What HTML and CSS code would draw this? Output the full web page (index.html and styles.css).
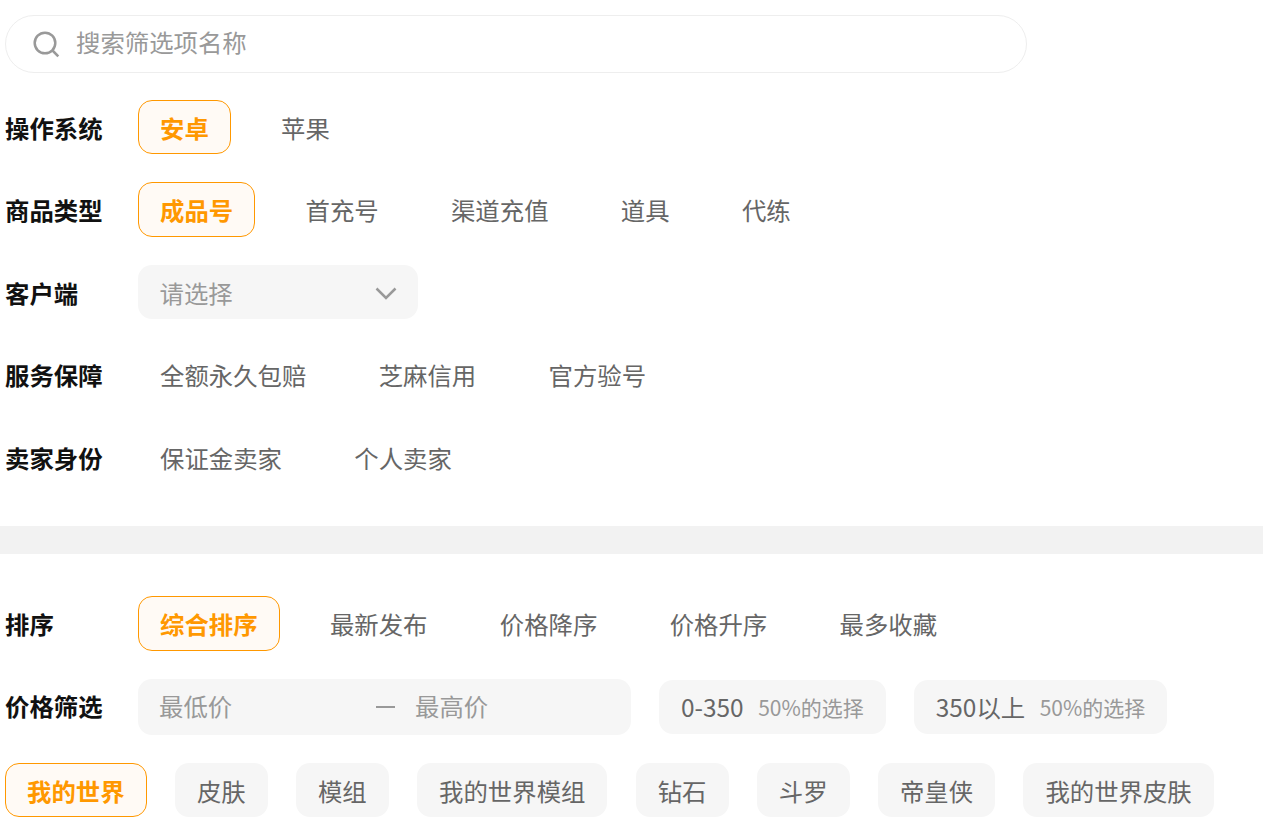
FILE: index.html
```html
<!DOCTYPE html>
<html lang="zh-CN">
<head>
    <meta charset="UTF-8">
    <title>筛选</title>
    <link rel="stylesheet" href="styles.css">
</head>
<body>
    <div class="search-box">
        <svg class="search-icon" width="27" height="27" viewBox="0 0 27 27" fill="none" stroke="#999" stroke-width="2.5"><circle cx="12" cy="12" r="10.3"/><path d="M19.5 19.5l5.8 5.8"/></svg>
        <span class="search-text">搜索筛选项名称</span>
    </div>

    <div class="filter-group">
        <div class="row"><div class="label">操作系统</div><span class="opt active">安卓</span><span class="opt">苹果</span></div>
        <div class="row"><div class="label">商品类型</div><span class="opt active">成品号</span><span class="opt">首充号</span><span class="opt">渠道充值</span><span class="opt">道具</span><span class="opt">代练</span></div>
        <div class="row"><div class="label">客户端</div>
            <div class="select"><span>请选择</span>
                <svg width="24" height="16" viewBox="0 0 24 16" fill="none" stroke="#999" stroke-width="2.5"><path d="M2.5 4.5l9.5 9.5 9.5-9.5"/></svg>
            </div>
        </div>
        <div class="row"><div class="label">服务保障</div><span class="opt">全额永久包赔</span><span class="opt">芝麻信用</span><span class="opt">官方验号</span></div>
        <div class="row"><div class="label">卖家身份</div><span class="opt">保证金卖家</span><span class="opt">个人卖家</span></div>
    </div>

    <div class="divider"></div>

    <div class="filter-group sort-group">
        <div class="row"><div class="label">排序</div><span class="opt active">综合排序</span><span class="opt">最新发布</span><span class="opt">价格降序</span><span class="opt">价格升序</span><span class="opt">最多收藏</span></div>
        <div class="row price-row"><div class="label">价格筛选</div>
            <div class="price-range"><span class="price-text price-min">最低价</span><span class="dash"></span><span class="price-text">最高价</span></div>
            <div class="price-tag">0-350<small>50%的选择</small></div>
            <div class="price-tag">350以上<small>50%的选择</small></div>
        </div>
        <div class="tags">
            <span class="tag active">我的世界</span><span class="tag">皮肤</span><span class="tag">模组</span><span class="tag">我的世界模组</span><span class="tag">钻石</span><span class="tag">斗罗</span><span class="tag">帝皇侠</span><span class="tag">我的世界皮肤</span>
        </div>
    </div>
</body>
</html>
```

FILE: styles.css
```css
* {
    box-sizing: border-box;
}
body {
    margin: 0;
    background: #fff;
    font-family: "Noto Sans CJK SC", "Noto Sans", sans-serif;
    font-size: 24.4px;
    color: #666;
    overflow: hidden;
}
.search-box {
    display: flex;
    align-items: center;
    width: 1022px;
    height: 58px;
    margin: 15px 0 0 5px;
    padding-left: 27px;
    border: 1px solid #eee;
    border-radius: 29px;
    color: #999;
}
.search-icon {
    margin-right: 16px;
}
.search-text {
    margin-bottom: 5px;
}
.filter-group {
    padding-left: 5px;
}
.row {
    display: flex;
    align-items: center;
    height: 54.5px;
    margin-top: 28px;
}
.filter-group > .row:first-child {
    margin-top: 26.8px;
}
.label {
    width: 133px;
    font-weight: 700;
    color: #111;
}
.opt {
    display: flex;
    align-items: center;
    height: 100%;
    padding: 0 21px;
    margin-right: 28.3px;
    border: 1px solid transparent;
    border-radius: 14px;
}
.opt.active, .tag.active {
    border-color: #ff9800;
    background: #fffaf5;
    color: #ff9800;
    font-weight: 700;
}
.select {
    display: flex;
    align-items: center;
    justify-content: space-between;
    width: 280px;
    height: 54px;
    padding: 0 20px 0 21.5px;
    background: #f6f6f6;
    border-radius: 14px;
    color: #999;
}
.divider {
    height: 28px;
    margin-top: 41.7px;
    background: #f2f2f2;
}
.sort-group > .row:first-child {
    margin-top: 42.3px;
}
.price-row {
    height: 56px;
}
.price-row .label {
    margin-bottom: 2px;
}
.price-range {
    display: flex;
    align-items: center;
    width: 493px;
    height: 56px;
    padding-left: 21px;
    margin-right: 28px;
    background: #f6f6f6;
    border-radius: 14px;
    color: #999;
}
.price-text {
    margin-bottom: 3px;
}
.price-min {
    width: 216.5px;
}
.dash {
    width: 19px;
    height: 2px;
    margin-right: 20.5px;
    background: #999;
}
.price-tag {
    display: flex;
    align-items: center;
    height: 54px;
    padding: 0 22px;
    margin-right: 28px;
    background: #f6f6f6;
    border-radius: 14px;
}
.price-tag small {
    margin-left: 14.5px;
    font-size: 21px;
    color: #999;
}
.tags {
    display: flex;
    gap: 28.3px;
    margin-top: 28px;
}
.tag {
    display: flex;
    align-items: center;
    height: 54px;
    padding: 1px 21px 0;
    background: #f6f6f6;
    border: 1px solid transparent;
    border-radius: 14px;
}
```
